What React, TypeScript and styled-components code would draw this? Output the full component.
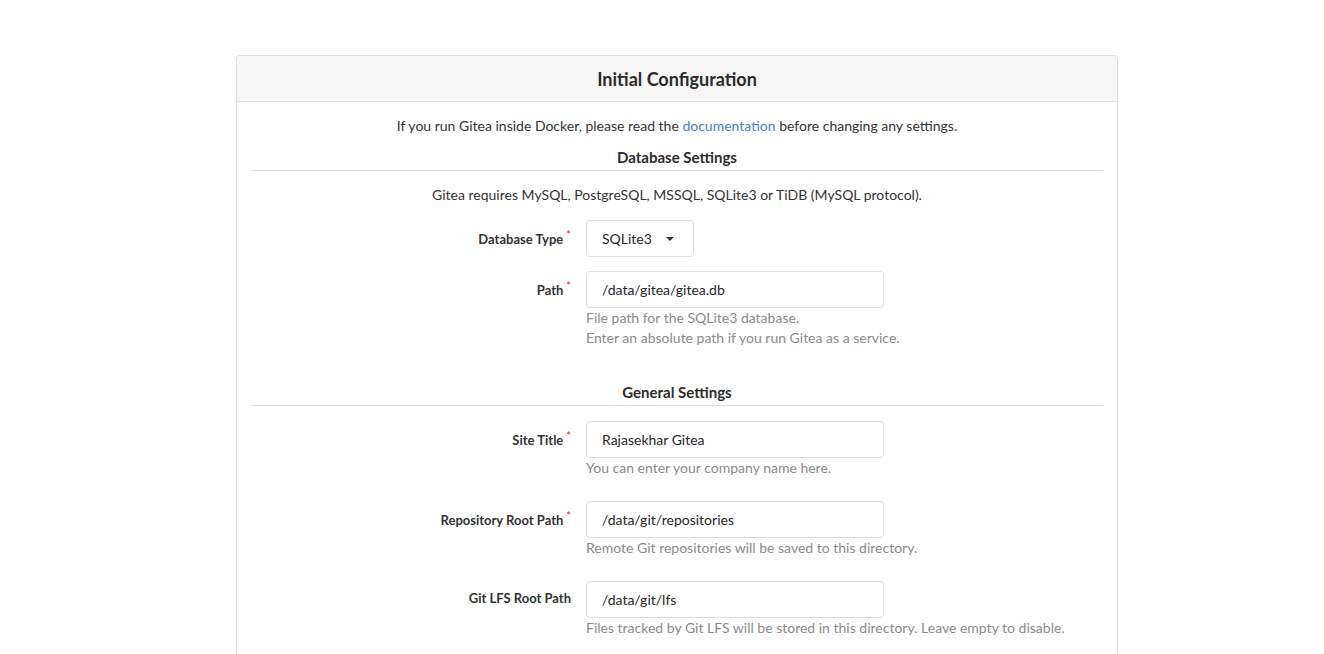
import React from "react";
import styled, { createGlobalStyle } from "styled-components";

const GlobalStyle = createGlobalStyle`
  html, body {
    margin: 0;
    padding: 0;
    background: #ffffff;
  }
  body {
    font-family: Lato, "Open Sans", "Liberation Sans", sans-serif;
    color: #333333;
    font-size: 14px;
  }
`;

const Page = styled.div`
  padding: 55px 0 0 236px;
`;

const Card = styled.div`
  width: 882px;
  box-sizing: border-box;
  border: 1px solid #dcdcdc;
  border-radius: 4px;
  background: #ffffff;
`;

const CardHeader = styled.h3`
  margin: 0;
  height: 45px;
  display: flex;
  align-items: center;
  justify-content: center;
  background: #f6f6f6;
  border-bottom: 1px solid #dcdcdc;
  border-radius: 4px 4px 0 0;
  font-size: 18px;
  font-weight: 700;
  color: #2b2b2b;
`;

const CardBody = styled.div`
  padding: 14px 14px 40px;
`;

const Centered = styled.p<{ $gap?: number }>`
  margin: 0 0 ${(p) => p.$gap ?? 0}px;
  text-align: center;
  line-height: 20px;
  font-size: 14px;
`;

const Link = styled.a`
  color: #4183c4;
  text-decoration: none;
`;

const SectionTitle = styled.h4<{ $top?: number; $bottom?: number }>`
  margin: ${(p) => p.$top ?? 11}px 0 ${(p) => p.$bottom ?? 14}px;
  padding-bottom: 3px;
  border-bottom: 1px solid #dedede;
  text-align: center;
  line-height: 20px;
  font-size: 15px;
  font-weight: 700;
  color: #2b2b2b;
`;

const Field = styled.div`
  display: grid;
  grid-template-columns: 320px 298px;
  column-gap: 15px;
  margin-bottom: 14px;
`;

const Label = styled.label`
  grid-column: 1;
  align-self: center;
  text-align: right;
  font-size: 13px;
  font-weight: 700;
  color: #333333;
  padding-bottom: 3px;
`;

const Required = styled.span`
  color: #db2828;
  font-size: 11px;
  font-weight: 400;
  vertical-align: 5px;
  margin-left: 3px;
`;

const Input = styled.input`
  grid-column: 2;
  box-sizing: border-box;
  width: 298px;
  height: 37px;
  padding: 0 15px;
  border: 1px solid #dedede;
  border-radius: 4px;
  font-family: inherit;
  font-size: 14px;
  color: #262626;
  outline: none;
`;

const Select = styled.div`
  grid-column: 2;
  box-sizing: border-box;
  width: 108px;
  height: 37px;
  padding: 0 15px;
  display: flex;
  align-items: center;
  justify-content: space-between;
  border: 1px solid #dedede;
  border-radius: 4px;
  font-size: 14px;
  color: #262626;
`;

const Caret = styled.span`
  width: 0;
  height: 0;
  margin-right: 4px;
  border-left: 4px solid transparent;
  border-right: 4px solid transparent;
  border-top: 4px solid #333333;
`;

const Help = styled.div`
  grid-column: 2;
  margin-bottom: 9px;
  line-height: 20px;
  font-size: 14px;
  color: #8a8a8a;
  white-space: nowrap;
`;

type FieldProps = {
  label: string;
  required?: boolean;
  value: string;
  help?: string[];
};

const TextField = ({ label, required, value, help }: FieldProps) => (
  <Field>
    <Label>
      {label}
      {required && <Required>*</Required>}
    </Label>
    <Input defaultValue={value} />
    {help && (
      <Help>
        {help.map((h) => (
          <div key={h}>{h}</div>
        ))}
      </Help>
    )}
  </Field>
);

const App = () => {
  return (
    <Page>
      <GlobalStyle />
      <Card>
        <CardHeader>Initial Configuration</CardHeader>
        <CardBody>
          <Centered>
            If you run Gitea inside Docker, please read the{" "}
            <Link href="#">documentation</Link> before changing any settings.
          </Centered>

          <SectionTitle>Database Settings</SectionTitle>
          <Centered $gap={15}>
            Gitea requires MySQL, PostgreSQL, MSSQL, SQLite3 or TiDB (MySQL
            protocol).
          </Centered>
          <Field>
            <Label>
              Database Type<Required>*</Required>
            </Label>
            <Select>
              SQLite3
              <Caret />
            </Select>
          </Field>
          <TextField
            label="Path"
            required
            value="/data/gitea/gitea.db"
            help={[
              "File path for the SQLite3 database.",
              "Enter an absolute path if you run Gitea as a service.",
            ]}
          />

          <SectionTitle $top={25} $bottom={15}>
            General Settings
          </SectionTitle>
          <TextField
            label="Site Title"
            required
            value="Rajasekhar Gitea"
            help={["You can enter your company name here."]}
          />
          <TextField
            label="Repository Root Path"
            required
            value="/data/git/repositories"
            help={["Remote Git repositories will be saved to this directory."]}
          />
          <TextField
            label="Git LFS Root Path"
            value="/data/git/lfs"
            help={[
              "Files tracked by Git LFS will be stored in this directory. Leave empty to disable.",
            ]}
          />
        </CardBody>
      </Card>
    </Page>
  );
};

export default App;
